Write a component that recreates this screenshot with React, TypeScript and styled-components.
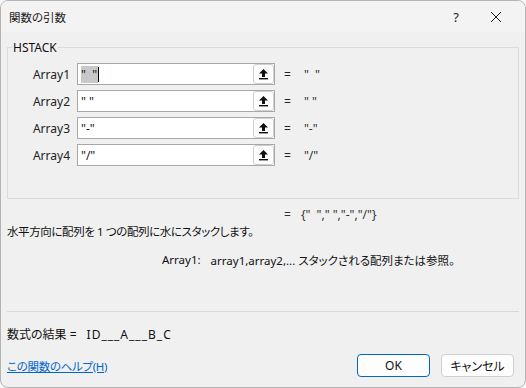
import React from 'react'
import styled, { createGlobalStyle } from 'styled-components'

const GlobalStyle = createGlobalStyle`
  html, body {
    margin: 0;
    padding: 0;
    background: #f7f7f7;
  }
  body {
    font-family: 'Noto Sans', 'Noto Sans CJK JP', sans-serif;
    font-size: 12px;
    font-feature-settings: 'palt';
    color: #1a1a1a;
  }
`

const args = [
  { name: 'Array1', value: '"  "', result: '"  "', selected: true },
  { name: 'Array2', value: '" "', result: '" "' },
  { name: 'Array3', value: '"-"', result: '"-"' },
  { name: 'Array4', value: '"/"', result: '"/"' },
]

function PickIcon() {
  return (
    <svg width="11" height="12" viewBox="0 0 11 12">
      <path d="M5.5 1 L10 5.5 L7 5.5 L7 9 L4 9 L4 5.5 L1 5.5 Z" fill="#111" />
      <rect x="1" y="10" width="9" height="1.4" fill="#111" />
    </svg>
  )
}

function CloseIcon() {
  return (
    <svg width="12" height="12" viewBox="0 0 12 12">
      <path d="M1 1 L11 11 M11 1 L1 11" stroke="#222" strokeWidth="1" fill="none" />
    </svg>
  )
}

export default function App() {
  return (
    <>
      <GlobalStyle />
      <Dialog>
        <TitleBar>
          <Title>関数の引数</Title>
          <TitleButtons>
            <HelpMark>?</HelpMark>
            <CloseIcon />
          </TitleButtons>
        </TitleBar>
        <Body>
          <GroupBox>
            <Legend>HSTACK</Legend>
            <ArgGrid>
              {args.map((a) => (
                <React.Fragment key={a.name}>
                  <ArgLabel>{a.name}</ArgLabel>
                  <InputBox>
                    <InputText>
                      {a.selected ? (
                        <>
                          <Selected>{a.value}</Selected>
                          <Caret />
                        </>
                      ) : (
                        a.value
                      )}
                    </InputText>
                    <PickButton>
                      <PickIcon />
                    </PickButton>
                  </InputBox>
                  <Equals>=</Equals>
                  <ArgResult>{a.result}</ArgResult>
                </React.Fragment>
              ))}
            </ArgGrid>
          </GroupBox>
          <TotalResult>
            <span>=</span>
            <span>{'{"  "," ","-","/"}'}</span>
          </TotalResult>
          <Description>水平方向に配列を 1 つの配列に水にスタックします。</Description>
          <ArgHelp>
            <span>Array1:</span>
            <span>array1,array2,... スタックされる配列または参照。</span>
          </ArgHelp>
          <Separator />
          <FormulaResult>
            数式の結果 =<ResultValue>ID___A___B_C</ResultValue>
          </FormulaResult>
          <Footer>
            <HelpLink href="#">この関数のヘルプ(H)</HelpLink>
            <Buttons>
              <DialogButton $primary>OK</DialogButton>
              <DialogButton>キャンセル</DialogButton>
            </Buttons>
          </Footer>
        </Body>
      </Dialog>
    </>
  )
}

const Dialog = styled.div`
  box-sizing: border-box;
  width: 526px;
  height: 388px;
  background: #f0f0f0;
  border: 1px solid #b4b4b4;
  border-radius: 8px;
  overflow: hidden;
  display: flex;
  flex-direction: column;
`

const TitleBar = styled.div`
  height: 31px;
  flex: none;
  display: flex;
  align-items: center;
  justify-content: space-between;
  background: #f3f3f3;
  padding-left: 8px;
`

const Title = styled.div`
  font-size: 11.5px;
  color: #1a1a1a;
`

const TitleButtons = styled.div`
  display: flex;
  align-items: center;
  gap: 31px;
  padding-right: 23px;
`

const HelpMark = styled.span`
  font-size: 13px;
  color: #222;
`

const Body = styled.div`
  flex: 1;
  display: flex;
  flex-direction: column;
  padding: 0 6px 0 6px;
`

const GroupBox = styled.fieldset`
  margin: 7px 0 0 0;
  padding: 7px 0 0 0;
  min-inline-size: 0;
  height: 160px;
  box-sizing: border-box;
  border: 1px solid #dcdcdc;
  border-radius: 0;
`

const Legend = styled.legend`
  padding: 0 1px;
  margin-left: 4px;
  font-size: 12px;
  color: #111;
`

const ArgGrid = styled.div`
  display: grid;
  grid-template-columns: 62px 206px auto 1fr;
  row-gap: 5px;
  align-items: center;
`

const ArgLabel = styled.div`
  text-align: right;
  font-size: 12px;
  color: #222;
`

const InputBox = styled.div`
  box-sizing: border-box;
  margin-left: 7px;
  height: 22px;
  width: 198px;
  border: 1px solid #a8a8a8;
  background: #fff;
  display: flex;
  align-items: center;
`

const InputText = styled.div`
  flex: 1;
  padding-left: 3px;
  font-size: 12px;
  display: flex;
  align-items: center;
  white-space: pre;
`

const Selected = styled.span`
  background: #c8c8c8;
  white-space: pre;
  padding-right: 1px;
`

const Caret = styled.span`
  display: inline-block;
  width: 1px;
  height: 15px;
  background: #000;
`

const PickButton = styled.div`
  box-sizing: border-box;
  width: 21px;
  height: 20px;
  border: 1px solid #cfcfcf;
  border-radius: 3px;
  background: #fdfdfd;
  display: flex;
  align-items: center;
  justify-content: center;
`

const Equals = styled.div`
  padding-left: 8px;
  font-size: 12px;
  color: #222;
`

const ArgResult = styled.div`
  padding-left: 13px;
  font-size: 12px;
  color: #333;
  white-space: pre;
`

const TotalResult = styled.div`
  margin: 7px 0 0 277px;
  display: flex;
  gap: 10px;
  font-size: 12px;
  color: #333;
  white-space: pre;
`

const Description = styled.div`
  margin-top: 0;
  font-size: 11.5px;
  letter-spacing: -0.4px;
  color: #111;
`

const ArgHelp = styled.div`
  margin: 13px 0 0 155px;
  display: flex;
  gap: 10px;
  font-size: 11.5px;
  color: #111;
`

const Separator = styled.div`
  margin-top: 43px;
  height: 1px;
  background: #d8d8d8;
`

const FormulaResult = styled.div`
  margin-top: 13px;
  font-size: 12px;
  color: #111;
`

const ResultValue = styled.span`
  margin-left: 10px;
  letter-spacing: 1px;
`

const Footer = styled.div`
  margin-top: 11px;
  display: flex;
  justify-content: space-between;
  align-items: center;
`

const HelpLink = styled.a`
  color: #0066cc;
  font-size: 11.5px;
  letter-spacing: -0.3px;
  text-decoration: underline;
`

const Buttons = styled.div`
  display: flex;
  gap: 11px;
  padding-right: 5px;
`

const DialogButton = styled.button<{ $primary?: boolean }>`
  box-sizing: border-box;
  width: 73px;
  height: 23px;
  font-family: inherit;
  font-size: 12px;
  font-feature-settings: 'palt';
  color: #111;
  border-radius: 4px;
  background: #fdfdfd;
  border: ${(p) => (p.$primary ? '1.5px solid #0067c0' : '1px solid #d0d0d0')};
  padding: 0;
`
